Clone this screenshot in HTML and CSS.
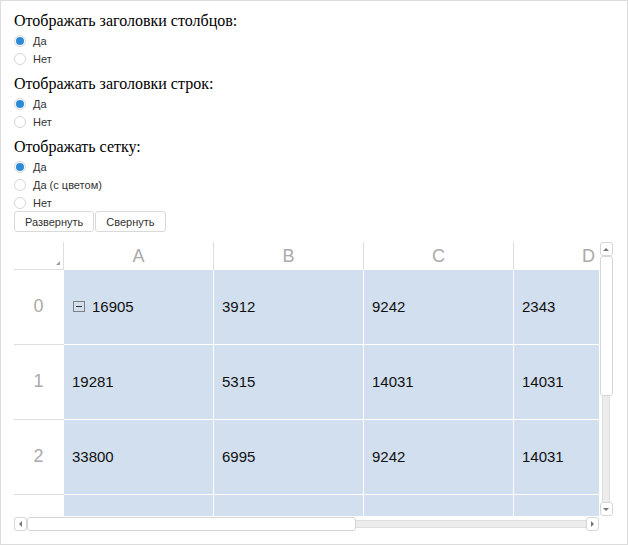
FILE: index.html
```html
<!DOCTYPE html>
<html lang="ru">
<head>
  <meta charset="UTF-8" />
  <title>Таблица</title>
  <link rel="stylesheet" href="styles.css">
</head>
<body>
  <div class="page">

    <!-- настройки отображения -->
    <div class="option">
      <div class="option-title">Отображать заголовки столбцов:</div>
      <label class="radio"><input type="radio" name="colHeaders" checked> Да</label>
      <label class="radio"><input type="radio" name="colHeaders"> Нет</label>
    </div>

    <div class="option">
      <div class="option-title">Отображать заголовки строк:</div>
      <label class="radio"><input type="radio" name="rowHeaders" checked> Да</label>
      <label class="radio"><input type="radio" name="rowHeaders"> Нет</label>
    </div>

    <div class="option">
      <div class="option-title">Отображать сетку:</div>
      <label class="radio"><input type="radio" name="grid" checked> Да</label>
      <label class="radio"><input type="radio" name="grid"> Да (с цветом)</label>
      <label class="radio"><input type="radio" name="grid"> Нет</label>
    </div>

    <div class="buttons">
      <button class="btn">Развернуть</button>
      <button class="btn">Свернуть</button>
    </div>

    <!-- таблица -->
    <div class="sheet">
      <div class="viewport">
        <div class="grid">
          <div class="corner"></div>
          <div class="col-head">A</div>
          <div class="col-head">B</div>
          <div class="col-head">C</div>
          <div class="col-head">D</div>

          <div class="row-head">0</div>
          <div class="cell"><span class="toggle"></span>16905</div>
          <div class="cell">3912</div>
          <div class="cell">9242</div>
          <div class="cell">2343</div>

          <div class="row-head">1</div>
          <div class="cell">19281</div>
          <div class="cell">5315</div>
          <div class="cell">14031</div>
          <div class="cell">14031</div>

          <div class="row-head">2</div>
          <div class="cell">33800</div>
          <div class="cell">6995</div>
          <div class="cell">9242</div>
          <div class="cell">14031</div>

          <div class="row-head"></div>
          <div class="cell"></div>
          <div class="cell"></div>
          <div class="cell"></div>
          <div class="cell"></div>
        </div>
      </div>

      <div class="vscroll">
        <div class="sb-btn"><span class="arr up"></span></div>
        <div class="sb-thumb-v"></div>
        <div class="sb-track-v"></div>
        <div class="sb-btn"><span class="arr down"></span></div>
      </div>

      <div class="hscroll">
        <div class="sb-btn"><span class="arr left"></span></div>
        <div class="sb-thumb-h"></div>
        <div class="sb-track-h"></div>
        <div class="sb-btn"><span class="arr right"></span></div>
      </div>
    </div>

  </div>
</body>
</html>
```

FILE: styles.css
```css
body {
  margin: 0;
  background: #fff;
}

.page {
  width: 628px;
  height: 545px;
  border: 1px solid #dcdcdc;
  padding: 10px 0 0 13px;
  box-sizing: border-box;
  overflow: hidden;
}

.option {
  margin-bottom: 6px;
}

.option-title {
  font-family: 'Liberation Serif', serif;
  font-size: 16px;
  line-height: 20px;
  color: #000;
  margin-bottom: 1px;
}

.radio {
  display: flex;
  align-items: center;
  gap: 7px;
  height: 18px;
  font-family: 'Liberation Sans', Arial, sans-serif;
  font-size: 11px;
  color: #333;
}

.radio input {
  appearance: none;
  margin: 0;
  width: 12px;
  height: 12px;
  border: 1px solid #d6d6d6;
  border-radius: 50%;
  background: #fff;
  box-sizing: border-box;
  display: grid;
  place-items: center;
}

.radio input:checked::after {
  content: '';
  width: 8px;
  height: 8px;
  border-radius: 50%;
  background: #2c8ad6;
}

.buttons {
  display: flex;
  gap: 1px;
  margin-top: -7px;
}

.btn {
  font-family: 'Liberation Sans', Arial, sans-serif;
  font-size: 11px;
  color: #333;
  background: #fff;
  border: 1px solid #d9d9d9;
  border-radius: 3px;
  height: 21px;
  padding: 0 10px;
}

/* таблица со скроллбарами */
.sheet {
  display: grid;
  grid-template-columns: 585px 13px;
  grid-template-rows: 274px 14px;
  margin-top: 10px;
}

.viewport {
  overflow: hidden;
}

.grid {
  display: grid;
  grid-template-columns: 50px repeat(4, 150px);
  grid-template-rows: 28px repeat(4, 75px);
  font-family: 'Liberation Sans', Arial, sans-serif;
}

.corner {
  position: relative;
  border-right: 1px solid #dedede;
  border-bottom: 1px solid #dedede;
}

.corner::after {
  content: '';
  position: absolute;
  right: 3px;
  bottom: 4px;
  border-left: 4px solid transparent;
  border-bottom: 4px solid #a0a0a0;
}

.col-head {
  border-right: 1px solid #dedede;
  color: #aaa;
  font-size: 18px;
  display: flex;
  align-items: center;
  justify-content: center;
  padding-top: 1px;
}

.row-head {
  border-bottom: 1px solid #dedede;
  color: #aaa;
  font-size: 18px;
  display: flex;
  align-items: center;
  justify-content: center;
  padding: 0 1px 2px 0;
}

.cell {
  background: #d2dfee;
  border-right: 1px solid #fff;
  border-bottom: 1px solid #fff;
  display: flex;
  align-items: center;
  padding: 0 0 2px 8px;
  font-size: 15px;
  color: #111;
}

.toggle {
  width: 12px;
  height: 11px;
  border: 1px solid #808080;
  box-sizing: border-box;
  margin: 1px 7px 0 1px;
  display: grid;
  place-items: center;
}

.toggle::after {
  content: '';
  width: 6px;
  height: 1px;
  background: #333;
}

/* скроллбары */
.vscroll {
  display: flex;
  flex-direction: column;
  align-items: center;
  margin-left: 1px;
}

.hscroll {
  display: flex;
  align-items: center;
  padding-top: 1px;
}

.sb-btn {
  width: 13px;
  height: 14px;
  border: 1px solid #d6d6d6;
  border-radius: 3px;
  background: #fff;
  box-sizing: border-box;
  display: grid;
  place-items: center;
  flex: none;
}

.sb-thumb-v {
  width: 13px;
  height: 140px;
  border: 1px solid #d6d6d6;
  border-radius: 3px;
  box-sizing: border-box;
  background: #fff;
}

.sb-track-v {
  flex: 1;
  width: 6px;
  background: #ececec;
  border: 1px solid #dedede;
  border-width: 0 1px;
}

.sb-thumb-h {
  width: 329px;
  height: 14px;
  border: 1px solid #d6d6d6;
  border-radius: 3px;
  box-sizing: border-box;
  background: #fff;
  flex: none;
}

.sb-track-h {
  flex: 1;
  height: 6px;
  background: #ececec;
  border: 1px solid #dedede;
  border-width: 1px 0;
}

.arr {
  width: 0;
  height: 0;
}

.arr.up {
  border-left: 3px solid transparent;
  border-right: 3px solid transparent;
  border-bottom: 3px solid #777;
}

.arr.down {
  border-left: 3px solid transparent;
  border-right: 3px solid transparent;
  border-top: 3px solid #777;
}

.arr.left {
  border-top: 3px solid transparent;
  border-bottom: 3px solid transparent;
  border-right: 3px solid #777;
}

.arr.right {
  border-top: 3px solid transparent;
  border-bottom: 3px solid transparent;
  border-left: 3px solid #777;
}
```
